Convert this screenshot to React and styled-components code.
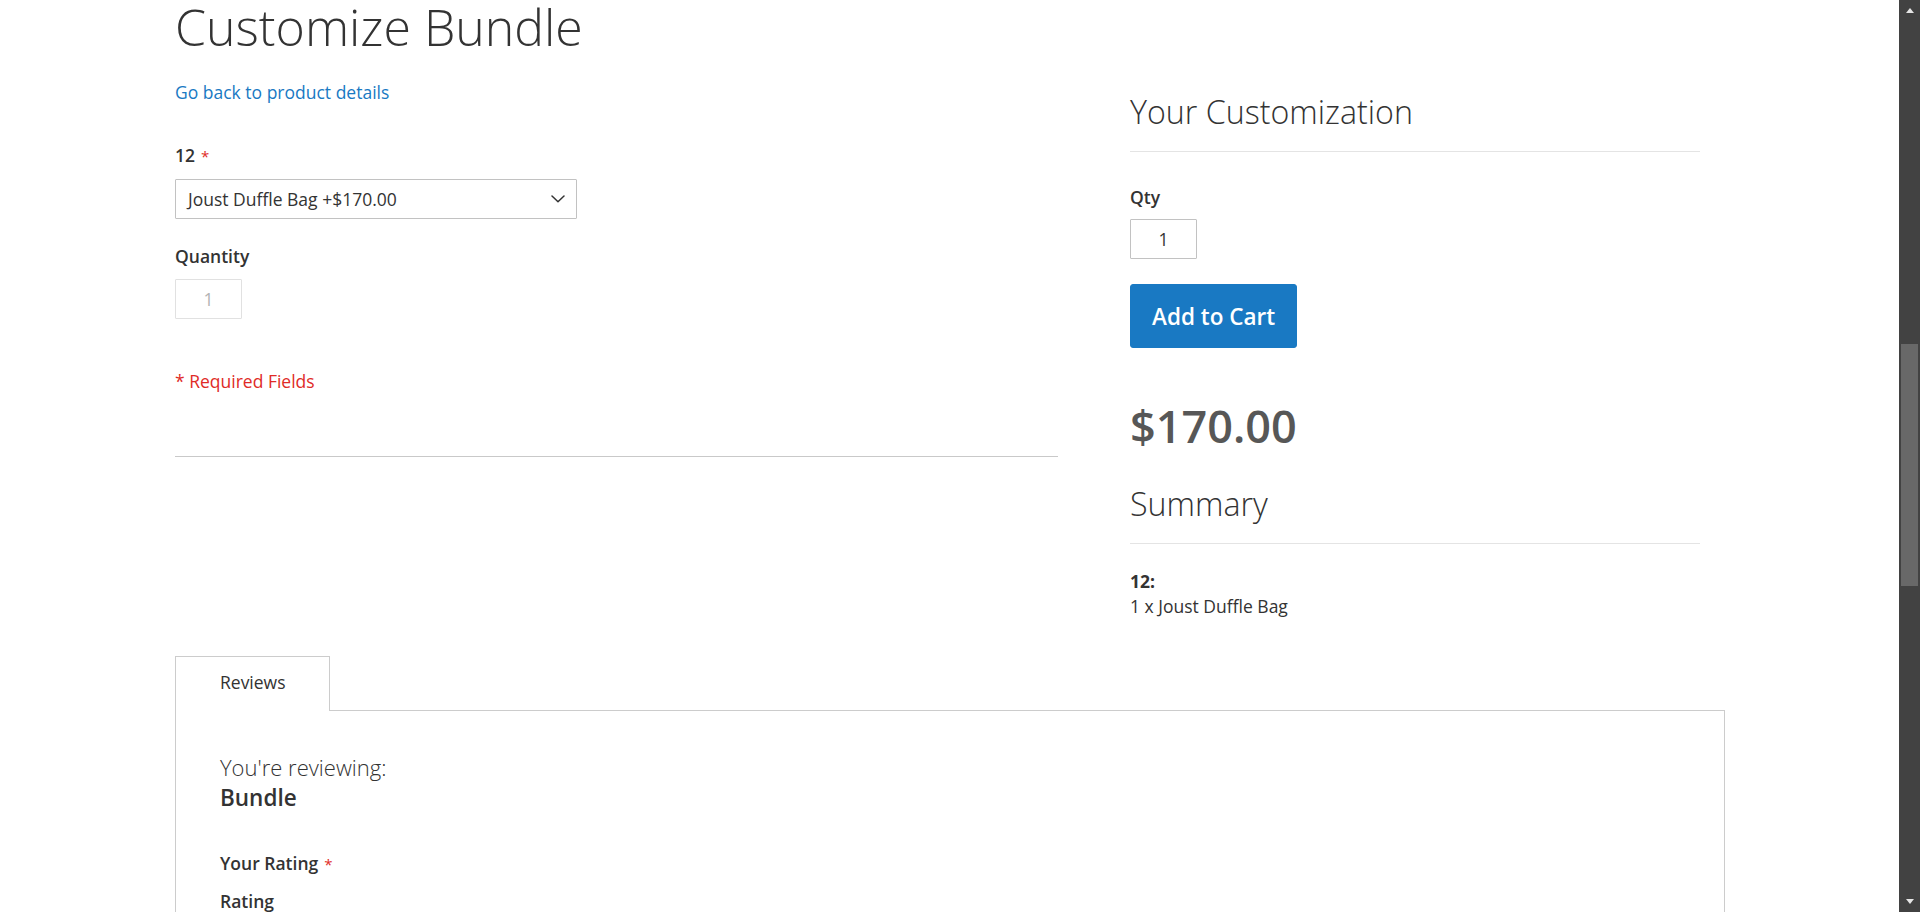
import React from "react";
import styled, { createGlobalStyle } from "styled-components";

const GlobalStyle = createGlobalStyle`
  * { box-sizing: border-box; }
  html, body {
    margin: 0;
    padding: 0;
    height: 100%;
    overflow: hidden;
    background: #ffffff;
  }
  body {
    font-family: "Open Sans", "Noto Sans", "Liberation Sans", sans-serif;
    color: #333333;
  }
  #root { height: 100%; }
`;

const Window = styled.div`
  display: flex;
  height: 100vh;
  width: 100vw;
`;

const Viewport = styled.main`
  flex: 1;
  min-width: 0;
  overflow: hidden;
`;

const Page = styled.div`
  width: 1550px;
  margin-left: 175px;
`;

const Columns = styled.div`
  display: flex;
  justify-content: space-between;
  align-items: flex-start;
`;

const OptionsColumn = styled.section`
  width: 883px;
  display: flex;
  flex-direction: column;
  align-items: flex-start;
`;

const SummaryColumn = styled.aside`
  width: 620px;
  padding: 0 25px;
  display: flex;
  flex-direction: column;
  align-items: flex-start;
`;

const PageTitle = styled.h1`
  margin: 0;
  font-size: 50px;
  line-height: 55px;
  font-weight: 300;
  color: #333;
`;

const BackLink = styled.a`
  display: block;
  margin-top: 25px;
  font-size: 17.5px;
  line-height: 25px;
  color: #1979c3;
  text-decoration: none;
  cursor: pointer;
`;

const FieldLabel = styled.div`
  margin-top: ${(p) => p.$gap}px;
  font-size: 17.5px;
  line-height: 25px;
  font-weight: 600;
  color: #333;
`;

const Asterisk = styled.span`
  margin-left: 6px;
  font-size: 15px;
  font-weight: 400;
  color: #e02b27;
`;

const SelectBox = styled.div`
  margin-top: 10px;
  width: 402px;
  height: 40px;
  border: 1px solid #c2c2c2;
  border-radius: 1px;
  padding: 0 11px 0 12px;
  display: flex;
  align-items: center;
  justify-content: space-between;
  font-size: 17.5px;
  color: #333;
  background: #fff;
`;

const QtyInput = styled.input`
  margin-top: ${(p) => p.$gap}px;
  width: 67px;
  height: 40px;
  border: 1px solid ${(p) => (p.disabled ? "#e1e1e1" : "#c2c2c2")};
  border-radius: 1px;
  background: #fff;
  text-align: center;
  font-family: "Open Sans", "Noto Sans", sans-serif;
  font-size: 17.5px;
  color: ${(p) => (p.disabled ? "#b3b3b3" : "#333")};
  padding: 0 4px;
  outline: none;
`;

const RequiredNote = styled.div`
  margin-top: 50px;
  font-size: 17.5px;
  line-height: 25px;
  color: #e02b27;
`;

const Divider = styled.div`
  margin-top: 62px;
  width: 100%;
  border-top: 1px solid #c9c9c9;
`;

const BlockTitle = styled.h2`
  margin: ${(p) => p.$gap}px 0 0;
  width: 100%;
  font-size: 32.2px;
  line-height: 40px;
  font-weight: 300;
  color: #333;
  padding-bottom: 19px;
  border-bottom: 1px solid #e4e4e4;
`;

const CartButton = styled.button`
  margin-top: 25px;
  height: 64px;
  padding: 0 21px;
  border: 1px solid #1979c3;
  border-radius: 3px;
  background: #1979c3;
  color: #fff;
  font-family: "Open Sans", "Noto Sans", sans-serif;
  font-size: 22.5px;
  font-weight: 600;
  display: inline-flex;
  align-items: center;
  cursor: pointer;
`;

const Price = styled.div`
  margin-top: 51px;
  font-size: 45px;
  line-height: 54px;
  font-weight: 600;
  color: #575757;
`;

const SummaryItems = styled.div`
  margin-top: 25px;
  font-size: 17.5px;
  line-height: 25px;
  color: #333;
`;

const SummaryKey = styled.div`
  font-weight: 700;
`;

const Tabs = styled.div`
  margin-top: 37px;
  display: flex;
  flex-direction: column;
`;

const TabList = styled.div`
  display: flex;
`;

const Tab = styled.div`
  position: relative;
  z-index: 1;
  margin-bottom: -1px;
  padding: 13px 43px 16px 44px;
  border: 1px solid #cccccc;
  border-bottom: none;
  background: #fff;
  font-size: 17.5px;
  line-height: 25px;
  color: #333;
`;

const TabPanel = styled.div`
  border: 1px solid #cccccc;
  padding: 42px 44px 60px;
  min-height: 300px;
`;

const Legend = styled.div`
  font-size: ${(p) => (p.$strong ? 22.5 : 22)}px;
  line-height: 29.5px;
  font-weight: ${(p) => (p.$strong ? 600 : 300)};
  color: #333;
`;

const ReviewLabel = styled.div`
  margin-top: ${(p) => p.$gap}px;
  font-size: 17.5px;
  line-height: 25px;
  font-weight: 600;
  color: #333;
`;

const ScrollbarTrack = styled.div`
  width: 21px;
  flex-shrink: 0;
  background: #424242;
  display: flex;
  flex-direction: column;
`;

const ScrollArrow = styled.div`
  height: 21px;
  display: flex;
  align-items: center;
  justify-content: center;
  &::before {
    content: "";
    width: 0;
    height: 0;
    border-left: 4.5px solid transparent;
    border-right: 4.5px solid transparent;
    ${(p) =>
      p.$down
        ? "border-top: 5px solid #e6e6e6;"
        : "border-bottom: 5px solid #e6e6e6;"}
  }
`;

const ScrollRail = styled.div`
  flex: 1;
  display: flex;
  flex-direction: column;
  align-items: center;
`;

const ScrollThumb = styled.div`
  margin-top: 323px;
  width: 17px;
  height: 242px;
  background: #686868;
`;

const Chevron = () => (
  <svg width="14" height="8" viewBox="0 0 14 8" aria-hidden="true">
    <polyline
      points="1,1 7,6.8 13,1"
      fill="none"
      stroke="#333"
      strokeWidth="1.5"
      strokeLinecap="round"
      strokeLinejoin="round"
    />
  </svg>
);

export default function App() {
  return (
    <>
      <GlobalStyle />
      <Window>
        <Viewport>
          <Page>
            <Columns>
              <OptionsColumn>
                <PageTitle>Customize Bundle</PageTitle>
                <BackLink>Go back to product details</BackLink>
                <FieldLabel $gap={38}>
                  12<Asterisk>*</Asterisk>
                </FieldLabel>
                <SelectBox>
                  <span>Joust Duffle Bag +$170.00</span>
                  <Chevron />
                </SelectBox>
                <FieldLabel $gap={25}>Quantity</FieldLabel>
                <QtyInput $gap={10} disabled defaultValue="1" />
                <RequiredNote>* Required Fields</RequiredNote>
                <Divider />
              </OptionsColumn>
              <SummaryColumn>
                <BlockTitle $gap={92}>Your Customization</BlockTitle>
                <FieldLabel $gap={33}>Qty</FieldLabel>
                <QtyInput $gap={9} defaultValue="1" />
                <CartButton>Add to Cart</CartButton>
                <Price>$170.00</Price>
                <BlockTitle $gap={31}>Summary</BlockTitle>
                <SummaryItems>
                  <SummaryKey>12:</SummaryKey>
                  <div>1 x Joust Duffle Bag</div>
                </SummaryItems>
              </SummaryColumn>
            </Columns>
            <Tabs>
              <TabList>
                <Tab>Reviews</Tab>
              </TabList>
              <TabPanel>
                <Legend>You're reviewing:</Legend>
                <Legend $strong>Bundle</Legend>
                <ReviewLabel $gap={38.5}>
                  Your Rating<Asterisk>*</Asterisk>
                </ReviewLabel>
                <ReviewLabel $gap={12}>Rating</ReviewLabel>
              </TabPanel>
            </Tabs>
          </Page>
        </Viewport>
        <ScrollbarTrack>
          <ScrollArrow />
          <ScrollRail>
            <ScrollThumb />
          </ScrollRail>
          <ScrollArrow $down />
        </ScrollbarTrack>
      </Window>
    </>
  );
}
